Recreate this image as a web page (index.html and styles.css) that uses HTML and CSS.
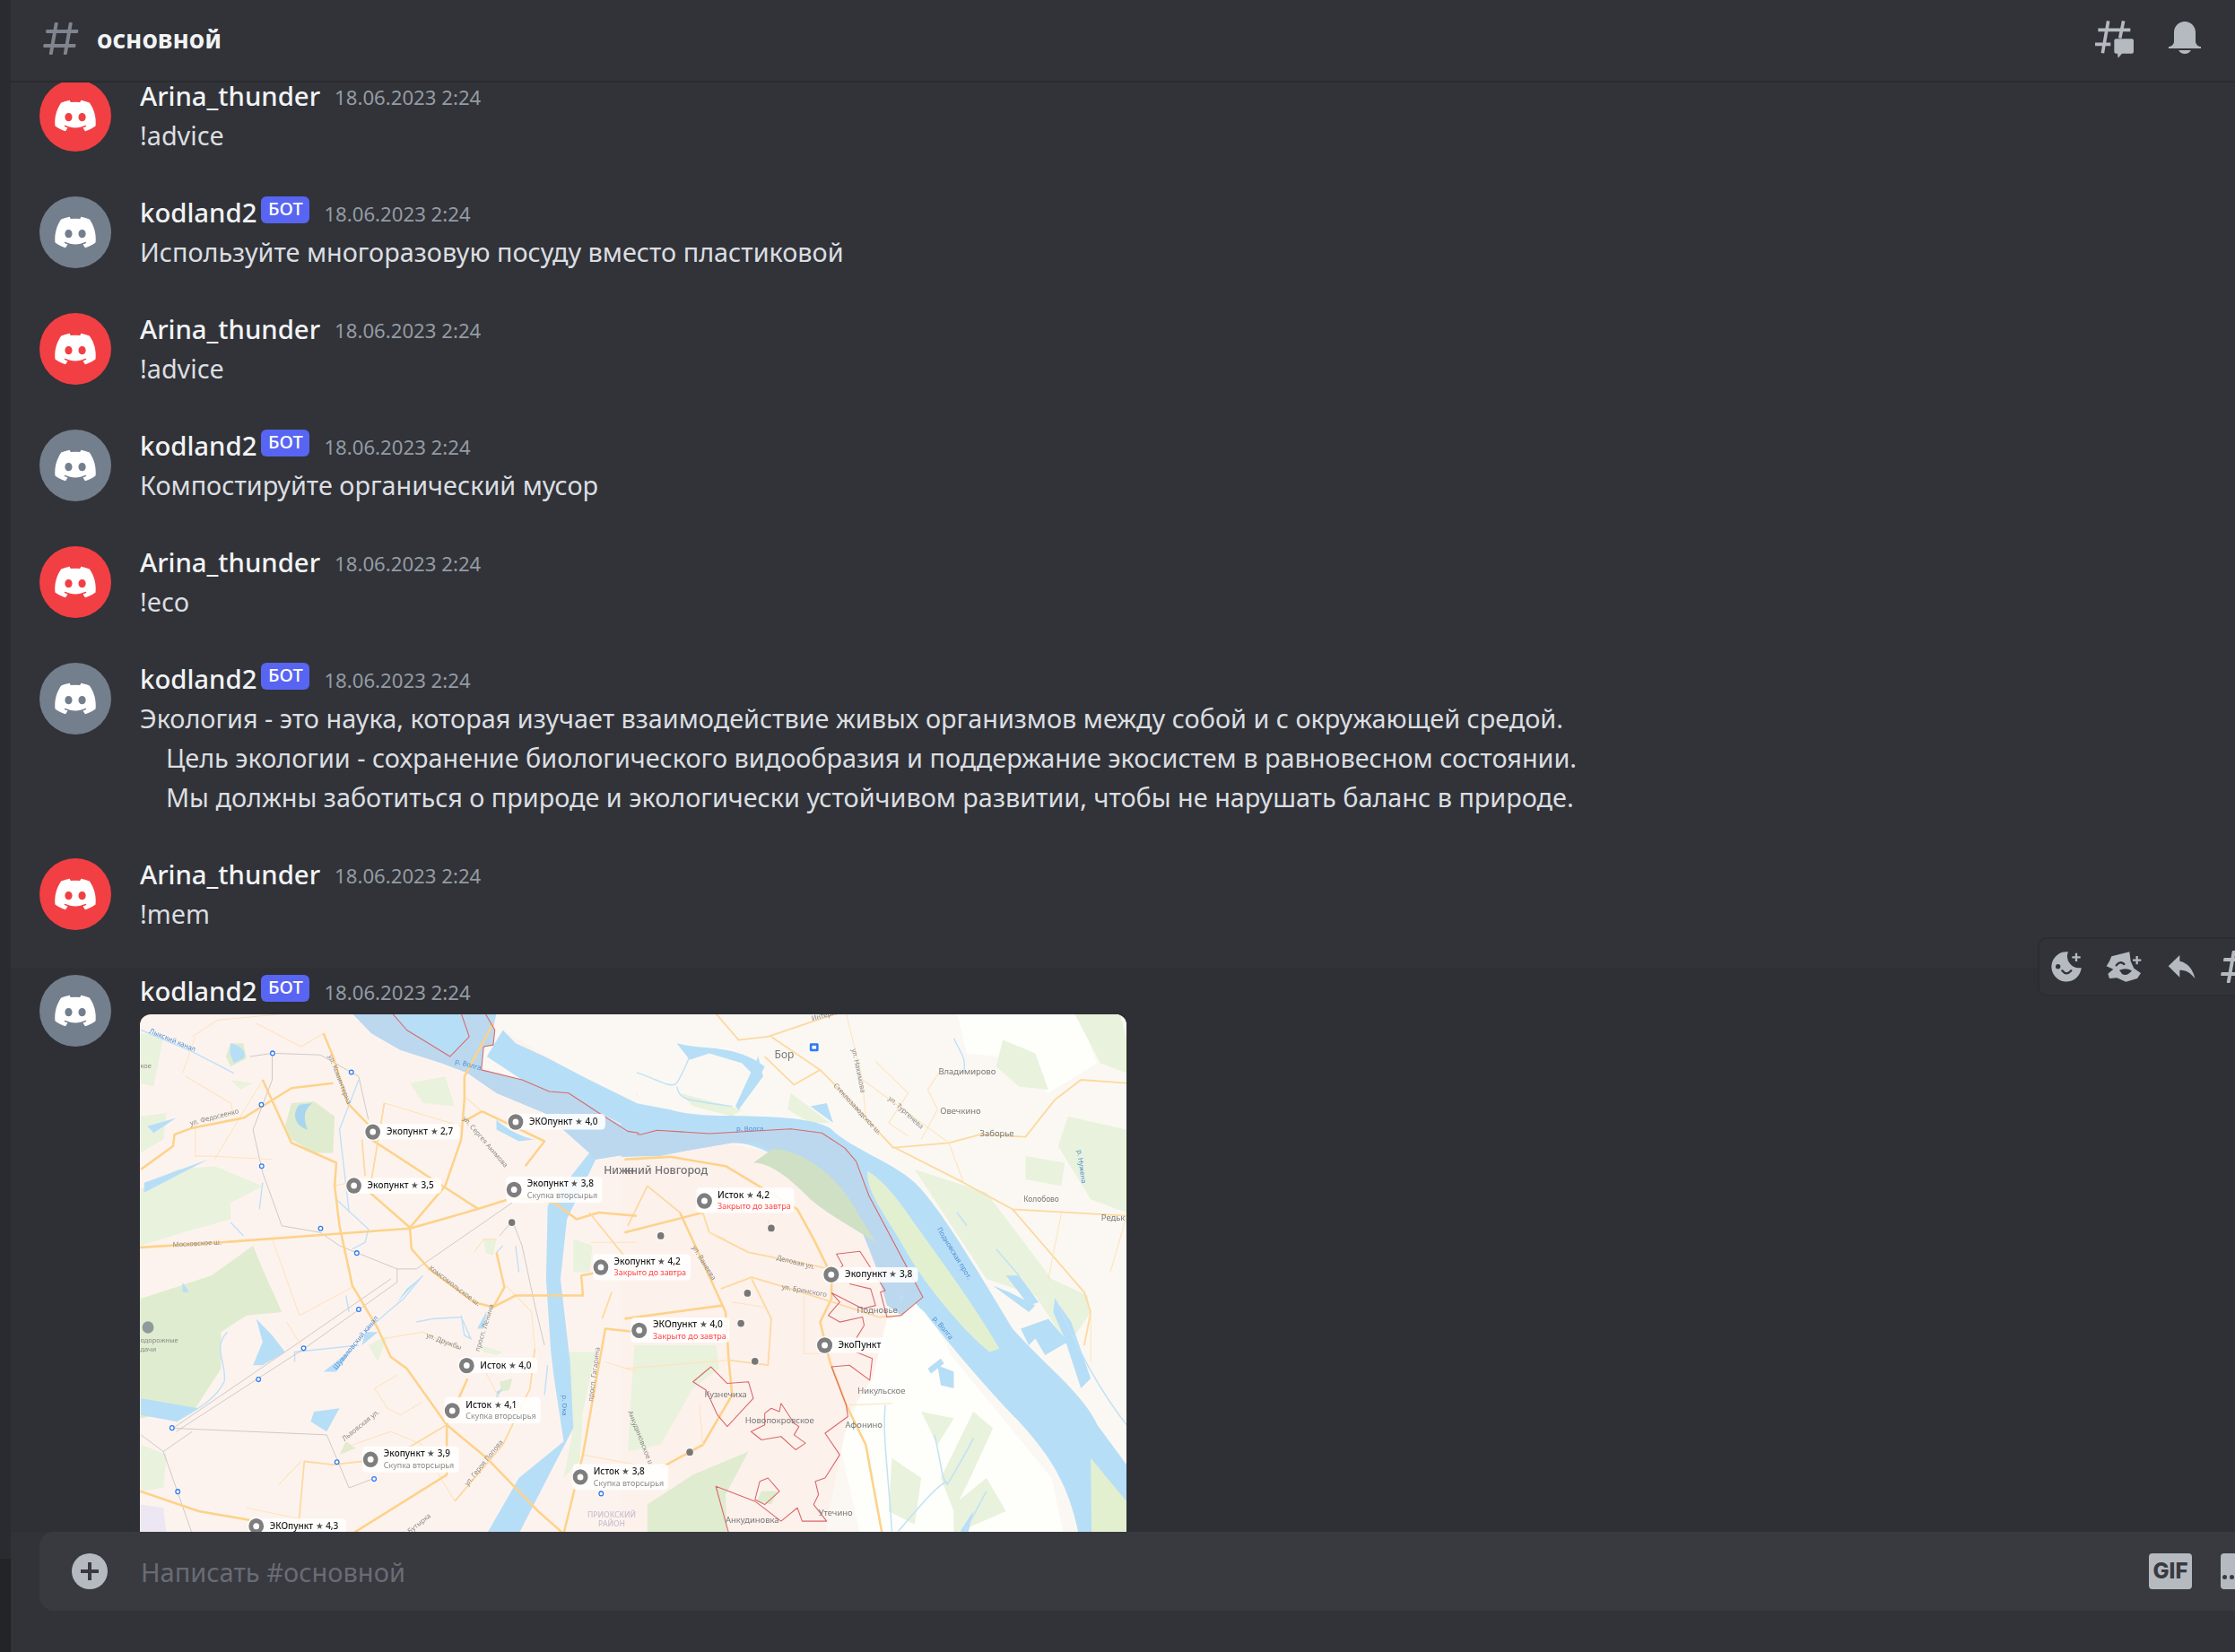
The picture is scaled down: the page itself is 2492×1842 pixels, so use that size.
FILE: index.html
```html
<!DOCTYPE html>
<html lang="ru">
<head>
<meta charset="utf-8">
<title>основной</title>
<link rel="stylesheet" href="styles.css">
</head>
<body>
<svg class="defs" width="0" height="0" aria-hidden="true">
  <defs>
    <symbol id="clyde" viewBox="0 0 24 24"><path fill="#fff" d="M19.27 5.33C17.94 4.71 16.5 4.26 15 4a.09.09 0 0 0-.07.03c-.18.33-.39.76-.53 1.09a16.09 16.09 0 0 0-4.8 0c-.14-.34-.35-.76-.54-1.09-.01-.02-.04-.03-.07-.03-1.5.26-2.93.71-4.27 1.33-.01 0-.02.01-.03.02-2.72 4.07-3.47 8.03-3.1 11.95 0 .02.01.04.03.05 1.8 1.32 3.53 2.12 5.24 2.65.03.01.06 0 .07-.02.4-.55.76-1.13 1.07-1.74.02-.04 0-.08-.04-.09-.57-.22-1.11-.48-1.64-.78-.04-.02-.04-.08-.01-.11.11-.08.22-.17.33-.25.02-.02.05-.02.07-.01 3.44 1.57 7.15 1.57 10.55 0 .02-.01.05-.01.07.01.11.09.22.17.33.26.04.03.04.09-.01.11-.52.31-1.07.56-1.64.78-.04.01-.05.06-.04.09.32.61.68 1.19 1.07 1.74.03.01.06.02.09.01 1.72-.53 3.45-1.33 5.25-2.65.02-.01.03-.03.03-.05.44-4.53-.73-8.46-3.1-11.95-.01-.01-.02-.02-.04-.02zM8.52 14.91c-1.03 0-1.89-.95-1.89-2.12s.84-2.12 1.89-2.12c1.06 0 1.9.96 1.89 2.12 0 1.17-.84 2.12-1.89 2.12zm6.97 0c-1.03 0-1.89-.95-1.89-2.12s.84-2.12 1.89-2.12c1.06 0 1.9.96 1.89 2.12 0 1.17-.83 2.12-1.89 2.12z"/></symbol>
    <symbol id="hash" viewBox="0 0 24 24"><path fill-rule="evenodd" d="M5.88657 21C5.57547 21 5.3399 20.7189 5.39427 20.4126L6.00001 17H2.59511C2.28449 17 2.04905 16.7198 2.10259 16.4138L2.27759 15.4138C2.31946 15.1746 2.52722 15 2.77011 15H6.35001L7.41001 9H4.00511C3.69449 9 3.45905 8.71977 3.51259 8.41381L3.68759 7.41381C3.72946 7.17456 3.93722 7 4.18011 7H7.76001L8.39677 3.41262C8.43914 3.17391 8.64664 3 8.88907 3H9.87344C10.1845 3 10.4201 3.28107 10.3657 3.58738L9.76001 7H15.76L16.3968 3.41262C16.4391 3.17391 16.6466 3 16.8891 3H17.8734C18.1845 3 18.4201 3.28107 18.3657 3.58738L17.76 7H21.1649C21.4755 7 21.711 7.28023 21.6574 7.58619L21.4824 8.58619C21.4406 8.82544 21.2328 9 20.9899 9H17.41L16.35 15H19.7549C20.0655 15 20.301 15.2802 20.2474 15.5862L20.0724 16.5862C20.0306 16.8254 19.8228 17 19.5799 17H16L15.3632 20.5874C15.3209 20.8261 15.1134 21 14.8709 21H13.8866C13.5755 21 13.3399 20.7189 13.3943 20.4126L14 17H8.00001L7.36325 20.5874C7.32088 20.8261 7.11337 21 6.87094 21H5.88657ZM9.41045 9L8.35045 15H14.3504L15.4104 9H9.41045Z"/></symbol>
    <g id="pin"><circle r="27" fill="#fff"/><circle r="23.5" fill="#7e7e7e"/><circle r="9.5" fill="#fff"/></g>
    <g id="metro"><circle r="6.5" fill="#fff" stroke="#2e7bf0" stroke-width="3.5"/></g>
    <g id="dot"><circle r="13" fill="#fff" opacity=".7"/><circle r="10.5" fill="#777"/></g>
  </defs>
</svg>

<div class="app">
  <div class="rail"><div class="rail-top"></div><div class="rail-bottom"></div></div>
  <main class="chat">
    <header class="topbar">
      <svg class="hash-icon"><use href="#hash"/></svg>
      <h1 class="channel">основной</h1>
      <div class="top-actions">
        <svg class="threads-icon" viewBox="405 68 135 130"><path class="ic-s" d="M452 72 433 180M503 72 491 130M418 102H526M408 150H460"/><path class="ic-f" d="M478 132H531a6 6 0 0 1 6 6V175a6 6 0 0 1-6 6H498L485 196 483 181H478a6 6 0 0 1-6-6V138a6 6 0 0 1 6-6Z"/></svg>
        <svg class="bell-icon" viewBox="0 0 24 24"><path class="ic-f" d="M18 9V14C18 15.657 19.344 17 21 17V18H3V17C4.656 17 6 15.657 6 14V9C6 5.686 8.686 3 12 3C15.314 3 18 5.686 18 9ZM11.9999 21C10.5239 21 9.24993 20.19 8.55493 19H15.4449C14.7499 20.19 13.4759 21 11.9999 21Z"/></svg>
      </div>
    </header>

    <section class="messages">
      <div class="list">
        <article class="msg">
          <div class="avatar red"><svg><use href="#clyde"/></svg></div>
          <div class="body"><div class="meta"><span class="name">Arina_thunder</span><time class="time">18.06.2023 2:24</time></div><p class="text">!advice</p></div>
        </article>
        <article class="msg">
          <div class="avatar grey"><svg><use href="#clyde"/></svg></div>
          <div class="body"><div class="meta"><span class="name">kodland2</span><span class="bot">БОТ</span><time class="time">18.06.2023 2:24</time></div><p class="text">Используйте многоразовую посуду вместо пластиковой</p></div>
        </article>
        <article class="msg">
          <div class="avatar red"><svg><use href="#clyde"/></svg></div>
          <div class="body"><div class="meta"><span class="name">Arina_thunder</span><time class="time">18.06.2023 2:24</time></div><p class="text">!advice</p></div>
        </article>
        <article class="msg">
          <div class="avatar grey"><svg><use href="#clyde"/></svg></div>
          <div class="body"><div class="meta"><span class="name">kodland2</span><span class="bot">БОТ</span><time class="time">18.06.2023 2:24</time></div><p class="text">Компостируйте органический мусор</p></div>
        </article>
        <article class="msg">
          <div class="avatar red"><svg><use href="#clyde"/></svg></div>
          <div class="body"><div class="meta"><span class="name">Arina_thunder</span><time class="time">18.06.2023 2:24</time></div><p class="text">!eco</p></div>
        </article>
        <article class="msg">
          <div class="avatar grey"><svg><use href="#clyde"/></svg></div>
          <div class="body"><div class="meta"><span class="name">kodland2</span><span class="bot">БОТ</span><time class="time">18.06.2023 2:24</time></div>
            <p class="text">Экология - это наука, которая изучает взаимодействие живых организмов между собой и с окружающей средой.</p>
            <p class="text indent">Цель экологии - сохранение биологического видообразия и поддержание экосистем в равновесном состоянии.</p>
            <p class="text indent">Мы должны заботиться о природе и экологически устойчивом развитии, чтобы не нарушать баланс в природе.</p>
          </div>
        </article>
        <article class="msg">
          <div class="avatar red"><svg><use href="#clyde"/></svg></div>
          <div class="body"><div class="meta"><span class="name">Arina_thunder</span><time class="time">18.06.2023 2:24</time></div><p class="text">!mem</p></div>
        </article>
        <article class="msg hovered">
          <div class="avatar grey"><svg><use href="#clyde"/></svg></div>
          <div class="body"><div class="meta"><span class="name">kodland2</span><span class="bot">БОТ</span><time class="time">18.06.2023 2:24</time></div>
            <svg class="map" viewBox="0 0 1100 640">
              <rect class="m-base" width="1100" height="640"/>
              <g transform="translate(544,-1) scale(.3635,.37)">
                <rect class="m-east" x="0" y="-10" width="1540" height="1780"/>
                <path class="m-white" d="M1010 0H1380L1440 150 1290 240 1130 130 1040 120ZM780 640 1000 1040 1300 1400 1380 1768H760L650 1300 780 1000Z"/>
                <path class="m-city" d="M-20 420 300 390 500 430 620 600 760 690 800 900 750 1100 680 1200 650 1340 610 1540 600 1768H-20Z"/>
                <path class="m-g1" d="M1150 80 1250 120 1290 230 1200 220 1130 160ZM1350 310 1530 350V600L1420 560 1320 400ZM1370 0H1510L1530 80V180L1450 150ZM1220 430 1340 450 1330 520 1220 500ZM900 1200 1000 1220 950 1300ZM1060 1200 1120 1250 1050 1400 1000 1500 960 1400ZM810 1340 900 1400 880 1540 800 1500ZM1000 1480 1100 1400 1160 1500 1000 1568ZM880 470 1100 540 1300 800 1410 850 1420 900 1350 1000 1250 850 1100 800 1000 650Z"/>
                <path class="m-g1" d="M160 240 350 290 320 310 200 280ZM500 240 620 330 560 330 490 290ZM20 1000 270 1000 280 1070 200 1130 100 1300 0 1320Z"/>
                <path class="m-g2" d="M60 1480 200 1390 370 1320 300 1450 310 1768H60ZM410 1440 460 1440 440 1480 395 1470Z"/>
                <path class="m-w" d="M-20 262 130 290C180 305 260 310 320 308 400 310 560 310 620 345 700 420 830 450 900 530 980 620 1100 820 1180 950 1280 1060 1400 1150 1440 1240L1530 1360V1768H1400C1400 1460 1300 1340 1200 1230 1100 1130 980 990 910 900 860 860 810 780 760 700 700 600 640 560 560 500 480 440 400 390 320 390 200 410 100 430-20 432Z"/>
                <path class="m-w" d="M150 90C220 110 330 90 420 160L400 200 350 150 250 120 190 140ZM1160 790H1200L1260 870 1230 880ZM1205 950 1290 920 1350 990 1280 1030 1250 980 1230 1000ZM1310 860 1360 930 1420 1100 1390 1130 1340 980 1305 900ZM400 130 415 190 340 290 330 280ZM0 260 30 240 0 320ZM560 280 610 270 630 330ZM950 1060 1000 1080 1000 1130 960 1120ZM920 1070 960 1040 970 1055 930 1085ZM1020 1560 1060 1500 1040 1580ZM1120 820 1170 840 1250 880 1230 900Z"/>
                <path class="m-island2" d="M1420 1340 1470 1400 1530 1470V1768H1425Z"/>
                <path class="m-ws" d="M0 170C80 190 130 230 150 210 170 180 180 150 190 130M150 220C160 260 170 260 320 280M790 1180C780 1260 800 1400 810 1560M940 1270C960 1340 960 1400 980 1420 1040 1320 1050 1300 1060 1280M1310 860C1370 980 1420 1100 1530 1240M830 1560C900 1480 950 1420 980 1410M1030 1568 1100 1440M1000 75C1020 120 1040 130 1030 180M1010 600 1040 640M1130 710 1200 790"/>
                <path class="m-tint" d="M-20 362 40 365 90 352 250 362 500 348 595 360 665 405 700 445 740 550 905 855 838 910 795 880 760 760 700 610 640 560 560 500 480 440 400 390 320 390 200 410 100 430-20 432Z"/>
                <path class="m-w" d="M835 845 850 860 835 870Z"/>
                <path class="m-island" d="M445 408C520 410 620 470 680 560L760 690C700 650 620 610 560 560 500 500 440 450 385 450Z"/>
                <path class="m-island2" d="M735 475C780 500 830 560 870 620 950 730 1050 860 1140 1010L1110 1020C1020 950 900 800 850 710 800 620 730 540 735 475Z"/>
                <path class="m-rd" d="M440 70 590 170 510 215 420 130M270 0 340 80 430 70 640 0M590 170 640 220 810 400 1030 510 1180 590 1530 610M810 405 985 390 1080 365 1220 372 1310 260 1390 200 1530 210M1180 590 1400 840 1420 900 1400 1000"/>
                <path class="m-rt" d="M670 0 720 200 730 320M720 200 985 390 1030 510M760 145 860 240 800 330 860 370M920 230 960 170M920 230 950 290 900 380M1420 900 1420 1050M1330 600 1290 800M1530 610 1480 780"/>
                <path class="m-rm" d="M-10 440 130 432 300 460 520 590 570 680 625 790V860L590 930 620 1050 670 1180 730 1300 780 1568M-10 660 230 600M160 600 300 900 310 1050 320 1150 230 1300 100 1370M-10 920 290 880"/>
                <path class="m-rd" d="M230 600 250 660 370 720 620 770M285 830 380 795 500 830 660 880 770 915 840 910M380 800 440 920 430 1060 310 1045M0 640 60 520 160 600"/>
                <path class="m-rt" d="M320 870 420 885M540 850V1025H590M250 660 300 680M220 1180 230 1300M680 1180 810 1175M440 660 430 620M-10 1070 310 1045"/>
                <path class="m-red" d="M-20 362 40 365 90 352 250 362 500 348 595 360 665 405 700 445 740 550 905 855 838 910 795 915 775 840 790 835 712 717 640 725 660 760 625 790M625 842 720 890 760 880 745 830 680 815M625 842 650 870 615 910 650 930 720 915 725 940 700 980M700 1020 750 1040 742 1105 680 1060 625 1065 670 1180 675 1215 605 1265 650 1330 605 1400 575 1410 585 1450 570 1480 610 1530 535 1530 520 1490 470 1530 390 1470 270 1425 310 1568M200 1110 255 1065 305 1115 370 1110 385 1160 305 1245 275 1210 240 1135ZM420 1205 440 1190 465 1200 470 1175 510 1235 525 1245 510 1270 545 1295 515 1315 470 1275 410 1285 378 1260 420 1240ZM405 1410 430 1400 465 1440 420 1480 390 1465Z"/>
              </g>
              <g transform="translate(-6,-1) scale(.3571,.37)">
                <path class="m-g1" d="M18 530 130 470 250 460 400 520 300 570 300 620 150 660 18 700ZM18 60 90 70 60 220 18 210ZM18 310 100 300 90 380 18 420ZM860 210 970 190 1000 280 900 270ZM300 200 370 210 330 230ZM1340 1020H1440L1400 1200 1390 1350 1340 1400 1370 1250ZM730 1000 790 970 760 1050ZM20 1300 100 1330 90 1430 20 1440ZM1090 680 1130 680 1120 730 1095 720ZM1080 1000 1150 1020 1130 1030 1090 1020ZM1370 680 1430 700 1420 780 1370 780Z"/>
                <path class="m-g2" d="M18 860 240 790 370 700 400 770 460 900 350 910 270 960 270 1070 190 1190 18 1220ZM490 270 560 265 625 310 620 420 560 420 490 380 470 340ZM300 90 340 90 350 135 300 160 285 130ZM660 1290 690 1310 640 1330ZM1140 1110 1180 1100 1170 1135 1145 1140Z"/>
                <path class="m-lav" d="M18 1480 90 1490 100 1568H18Z"/>
                <path class="m-w" d="M680 0H1130L1090 175 1210 200 1450 300 1568 360V420L1440 440 1350 620 1330 800 1360 1050 1370 1250 1300 1380 1200 1568H1100L1200 1400 1340 1290 1310 1100 1300 1020 1285 800 1290 580 1420 420 1280 300 1130 240 1040 180 960 150 830 110 740 60Z"/>
                <path class="m-white-land" d="M1130 0 1125 50 1090 100 1083 170 1210 200 1120 130 1150 50 1290 130 1530 270 1568 280V0Z"/>
                <path class="m-w" d="M1150 50 1190 90 1280 130 1420 200 1568 270V355L1450 300 1295 235 1210 200 1100 130ZM1030 100 1050 70 1060 40 1080 30 1100 100 1020 120ZM1130 320C1150 340 1200 370 1250 380L1200 385 1130 350Z"/>
                <path class="m-tint" d="M805 0 850 50 985 130 1045 70 1020 0H1095L1125 50 1120 95 1090 100 1083 170 1210 200 1295 235 1355 240 1450 300 1540 355 1568 360V420L1440 440 1420 420 1280 300 1130 240 1040 180 960 150 830 110 740 60 680 0Z"/>
                <path class="m-w" d="M380 920 430 970 470 1020 400 1060 370 1060 400 990ZM720 960 760 960 710 1000ZM590 1080 680 1010 630 1080ZM560 1200 640 1190 600 1260 550 1230ZM20 1160 200 1190 130 1230 20 1210ZM300 90C340 100 350 120 340 135L310 150 298 120ZM30 510 230 440 150 480 30 540ZM1070 950 1100 895 1090 950ZM820 870 900 790 850 830ZM40 340 130 315 60 360ZM150 810 170 840 150 840ZM1130 1140 1150 1130 1130 1160Z"/>
                <path class="m-ws" d="M290 960C240 1010 290 1050 280 1110 250 1170 180 1200 130 1230M300 630 340 670M400 510 390 590M660 850 670 900M20 50 180 115 310 180M720 960 790 900 840 860 900 790M630 560 730 650 720 690 680 710M700 200 640 350 670 600M1130 720 1150 700M500 1050 500 1020 700 1000M1020 910 1030 970 1050 980 1020 915 930 920 880 930M1190 700 1200 780M1290 1060 1280 1150"/>
                <path class="m-ring" d="M515 275C490 300 500 340 540 350 525 310 530 290 555 270Z"/>
                <path class="m-rl" d="M430 120V200L370 350 400 480 460 640 580 660 640 700 820 770H880L1180 570M120 1250 500 1000 800 800M130 1260 530 1010 820 810V770M120 1250 600 1270 670 1430 750 1400M20 1270 90 1320 180 1568M360 130 430 120 580 125 700 190 730 320M1140 670 1180 625 1210 700 1250 880 1280 1000M90 1320 180 1260"/>
                <path class="m-rt" d="M180 70 260 20 480 0M380 30 520 100 590 60M150 180 190 70M160 190 300 270 310 310M190 330V430H240L430 440M400 200 250 440M780 270 1020 340M780 270 740 500M1030 250 1090 300M620 520 720 500M430 680 515 910M515 910 680 825M475 930 520 1000M780 980 900 960 1010 1010M1095 1080 1140 1160M750 1130 820 1090M750 1130 790 1190 830 1210 900 1170M650 1310 800 1260 900 1300M450 1420 520 1350M900 1310 1000 1470M350 1490 650 1550M1160 820 1240 900 1250 1010M1400 1330 1568 1360M1060 720 1090 680 1130 680M1425 690H1568M1470 1050 1568 1080"/>
                <path class="m-rm" d="M590 60 620 130 665 270 730 335M20 470 120 400 125 365 180 345 340 315 490 225 620 210M400 200 490 390 630 450 625 520 640 640 680 820 760 950 800 1035 850 1070 975 1240 1100 1340 1260 1500 1340 1568M18 705 270 690 620 665 860 648 1070 590 1185 555M740 380 970 525 1075 590M735 540 860 645 970 520 1020 380 1030 260V190L1120 30M860 650 865 710 920 770 1060 870 1120 885 1190 850H1400L1395 790 1450 780M1130 720 1155 825 1120 885M680 1568 975 1390V1240L1040 1100M1340 1568 1400 1330 1470 950 1568 960M1085 295 1030 325M1085 295 1280 385 1220 460M1185 555 1310 570 1380 620 1450 600 1568 610M18 1440 200 1500 380 1530"/>
                <path class="m-rd" d="M975 1240 800 1340 620 1360 530 1350 510 1568M780 270 740 500H710M1250 1010 1235 1130 1150 1300 1000 1470M1490 840 1460 920M710 380 720 490M1420 600 1570 780"/>
                <path class="m-red" d="M805 0 850 50 985 130 1045 70 1020 0M1095 0 1125 50 1120 95 1090 100 1083 170 1210 200 1295 235 1355 240 1450 300 1540 355 1575 360"/>
              </g>

              <g transform="translate(544,-1) scale(.3635,.37)">
                <text class="m-town big" x="450" y="135">Бор</text>
                <rect x="558" y="90" width="27" height="24" rx="4" fill="#2e7bf0"/><rect x="565" y="97" width="13" height="10" fill="#fff"/>
                <text class="m-town" x="953" y="183">Владимирово</text>
                <text class="m-town" x="958" y="304">Овечкино</text>
                <text class="m-town" x="1080" y="370">Заборье</text>
                <text class="m-town s" x="1214" y="567">Колобово</text>
                <text class="m-town" x="1452" y="624">Редьк</text>
                <text class="m-town" x="703" y="902">Подновье</text>
                <text class="m-town" x="705" y="1145">Никульское</text>
                <text class="m-town" x="667" y="1250">Афонино</text>
                <text class="m-town" x="235" y="1157">Кузнечиха</text>
                <text class="m-town" x="360" y="1234">Новопокровское</text>
                <text class="m-town" x="300" y="1536">Анкудиновка</text>
                <text class="m-town" x="585" y="1514">Утечино</text>
                <text class="m-city-name" x="-10" y="485">кний Новгород</text>
                <text class="m-river" x="333" y="355">р. Волга</text>
                <text class="m-river" transform="translate(935,920) rotate(50)">р. Волга</text>
                <text class="m-river" transform="translate(948,650) rotate(58)">Подновская прот.</text>
                <text class="m-river" transform="translate(1378,412) rotate(82)">р. Нужена</text>
                <text class="m-st" transform="translate(687,108) rotate(78)">ул. Нахимова</text>
                <text class="m-st" transform="translate(798,258) rotate(42)">ул. Тургенева</text>
                <text class="m-st" transform="translate(630,218) rotate(47)">Стеклозаводское ш.</text>
                <text class="m-st" transform="translate(197,705) rotate(58)">ул. Ванеева</text>
                <text class="m-st" transform="translate(455,742) rotate(14)">Деловая ул.</text>
                <text class="m-st" transform="translate(472,830) rotate(10)">ул. Бринского</text>
                <text class="m-st" transform="translate(565,22) rotate(-14)">Интернац</text>
                <text class="m-st" transform="translate(0,1200) rotate(68)">Анкудиновское ш.</text>

                <rect class="m-box" x="210" y="525" width="300" height="76" rx="12"/>
                <use href="#pin" x="235" y="565"/>
                <text class="m-l" x="275" y="556">Исток <tspan class="m-star">★</tspan> 4,2</text>
                <text class="m-sub warn" x="275" y="590">Закрыто до завтра</text>

                <rect class="m-box" x="600" y="765" width="290" height="46" rx="12"/>
                <use href="#pin" x="624" y="787"/>
                <text class="m-l" x="666" y="795">Экопункт <tspan class="m-star">★</tspan> 3,8</text>

                <rect class="m-box" x="580" y="977" width="213" height="46" rx="12"/>
                <use href="#pin" x="604" y="1000"/>
                <text class="m-l" x="645" y="1008">ЭкоПункт</text>

                <rect class="m-box" x="10" y="916" width="302" height="76" rx="12"/>
                <use href="#pin" x="35" y="955"/>
                <text class="m-l" x="77" y="947">ЭКОпункт <tspan class="m-star">★</tspan> 4,0</text>
                <text class="m-sub warn" x="77" y="981">Закрыто до завтра</text>

                <use href="#dot" x="101" y="670"/><use href="#dot" x="440" y="647"/><use href="#dot" x="367" y="843"/><use href="#dot" x="347" y="934"/><use href="#dot" x="390" y="1048"/><use href="#dot" x="190" y="1322"/>
              </g>

              <g transform="translate(-6,-1) scale(.3571,.37)">
                <text class="m-city-name" x="1465" y="485">Нижн</text>
                <text class="m-st" x="18" y="165">кое</text>
                <text class="m-st" x="18" y="992">одорожные</text>
                <text class="m-st" x="18" y="1019">дачи</text>
                <circle cx="42" cy="946" r="18" fill="#8e9a9c"/>
                <text class="m-st" transform="translate(175,338) rotate(-14)">ул. Федосеенко</text>
                <text class="m-st" transform="translate(120,704) rotate(-3)">Московское ш.</text>
                <text class="m-st" transform="translate(605,128) rotate(68)">ул. Коминтерна</text>
                <text class="m-st" transform="translate(1024,318) rotate(48)">ул. Сергея Акимова</text>
                <text class="m-st" transform="translate(918,770) rotate(36)">Комсомольское ш.</text>
                <text class="m-st" transform="translate(910,975) rotate(20)">ул. Дружбы</text>
                <text class="m-st" transform="translate(1076,1020) rotate(-72)">просп. Ленина</text>
                <text class="m-st" transform="translate(655,1290) rotate(-38)">Львовская ул.</text>
                <text class="m-st" transform="translate(1040,1425) rotate(-50)">ул. Героя Попова</text>
                <text class="m-st" transform="translate(1430,1170) rotate(-82)">просп. Гагарина</text>
                <text class="m-st" transform="translate(860,1568) rotate(-38)">Бутырка</text>
                <text class="m-river" transform="translate(45,58) rotate(22)">Лыкский канал</text>
                <text class="m-river" x="1000" y="150" transform="rotate(15 1000 150)">р. Волга</text>
                <text class="m-river" transform="translate(630,1075) rotate(-50)">Шуваловский канал</text>
                <text class="m-river" transform="translate(1335,1150) rotate(90)">р. Ока</text>
                <text class="m-dist" x="1490" y="1518">ПРИОКСКИЙ</text>
                <text class="m-dist" x="1490" y="1546">РАЙОН</text>

                <rect class="m-box" x="720" y="333" width="295" height="47" rx="12"/>
                <use href="#pin" x="744" y="357"/>
                <text class="m-l" x="787" y="365">Экопункт <tspan class="m-star">★</tspan> 2,7</text>

                <rect class="m-box" x="1166" y="303" width="304" height="47" rx="12"/>
                <use href="#pin" x="1190" y="327"/>
                <text class="m-l" x="1232" y="335">ЭКОпункт <tspan class="m-star">★</tspan> 4,0</text>

                <rect class="m-box" x="662" y="496" width="296" height="47" rx="12"/>
                <use href="#pin" x="685" y="519"/>
                <text class="m-l" x="727" y="527">Экопункт <tspan class="m-star">★</tspan> 3,5</text>

                <rect class="m-box" x="1160" y="492" width="300" height="78" rx="12"/>
                <use href="#pin" x="1185" y="531"/>
                <text class="m-l" x="1226" y="523">Экопункт <tspan class="m-star">★</tspan> 3,8</text>
                <text class="m-sub" x="1226" y="557">Скупка вторсырья</text>

                <rect class="m-box" x="1013" y="1037" width="245" height="47" rx="12"/>
                <use href="#pin" x="1037" y="1061"/>
                <text class="m-l" x="1079" y="1069">Исток <tspan class="m-star">★</tspan> 4,0</text>

                <rect class="m-box" x="968" y="1157" width="300" height="78" rx="12"/>
                <use href="#pin" x="992" y="1197"/>
                <text class="m-l" x="1034" y="1189">Исток <tspan class="m-star">★</tspan> 4,1</text>
                <text class="m-sub" x="1034" y="1222">Скупка вторсырья</text>

                <rect class="m-box" x="712" y="1305" width="301" height="78" rx="12"/>
                <use href="#pin" x="737" y="1344"/>
                <text class="m-l" x="778" y="1336">Экопункт <tspan class="m-star">★</tspan> 3,9</text>
                <text class="m-sub" x="778" y="1370">Скупка вторсырья</text>

                <rect class="m-box" x="1368" y="1358" width="298" height="78" rx="12"/>
                <use href="#pin" x="1392" y="1397"/>
                <text class="m-l" x="1433" y="1389">Исток <tspan class="m-star">★</tspan> 3,8</text>
                <text class="m-sub" x="1433" y="1423">Скупка вторсырья</text>

                <rect class="m-box" x="1432" y="726" width="304" height="78" rx="12"/>
                <use href="#pin" x="1456" y="765"/>
                <text class="m-l" x="1497" y="757">Экопункт <tspan class="m-star">★</tspan> 4,2</text>
                <text class="m-sub warn" x="1497" y="790">Закрыто до завтра</text>

                <rect class="m-box" x="356" y="1522" width="304" height="47" rx="12"/>
                <use href="#pin" x="380" y="1545"/>
                <text class="m-l" x="422" y="1553">ЭКОпункт <tspan class="m-star">★</tspan> 4,3</text>

                <use href="#dot" x="1178" y="630"/>
                <use href="#metro" x="431" y="120"/><use href="#metro" x="677" y="177"/><use href="#metro" x="396" y="275"/><use href="#metro" x="397" y="460"/><use href="#metro" x="581" y="648"/><use href="#metro" x="694" y="722"/><use href="#metro" x="700" y="892"/><use href="#metro" x="528" y="1009"/><use href="#metro" x="387" y="1103"/><use href="#metro" x="117" y="1249"/><use href="#metro" x="632" y="1352"/><use href="#metro" x="748" y="1403"/><use href="#metro" x="135" y="1441"/><use href="#metro" x="1457" y="1447"/>
              </g>
            </svg>
          </div>
          <div class="toolbar">
            <button class="tool"><svg viewBox="252 87 120 120"><path class="ic-f" d="M318 97A50 50 0 1 0 362 150 39 39 0 0 1 318 97Z"/><circle class="ic-cut" cx="284" cy="146" r="8"/><path class="ic-cs" d="M298 160Q312 178 328 160"/><path class="ic-p" d="M345 101V129M331 115H359"/></svg></button>
            <button class="tool"><svg viewBox="443 87 120 120"><path class="ic-f" d="M462 112 522 97 526 128 537 152 560 168 548 186 510 197 480 184 455 186 450 170 468 155 445 145 455 128Z"/><path class="ic-cs" d="M478 142Q490 126 504 138"/><path class="ic-cut" d="M488 158Q510 148 530 160 515 180 498 172Z"/><path class="ic-p" d="M547 111V139M533 125H561"/></svg></button>
            <button class="tool"><svg viewBox="635 87 120 120"><path class="ic-f" d="M652 145 690 108V128C715 132 735 155 741 186 725 165 710 158 690 158V182Z"/></svg></button>
            <button class="tool tool-hash"><svg><use href="#hash"/></svg></button>
          </div>
        </article>
      </div>
    </section>

    <footer class="composer">
      <div class="input">
        <button class="plus"><svg viewBox="0 0 40 40"><circle class="ic-f" cx="20" cy="20" r="20"/><path class="ic-plus" d="M20 10V30M10 20H30"/></svg></button>
        <span class="placeholder">Написать #основной</span>
        <button class="gif">GIF</button>
        <button class="sticker"><i></i><i></i></button>
      </div>
    </footer>
  </main>
</div>
</body>
</html>
```
FILE: styles.css
```css
* { box-sizing: border-box; }
html, body { margin: 0; padding: 0; height: 100%; overflow: hidden; background: #313338; }
body { font-family: "Noto Sans", "Liberation Sans", sans-serif; color: #dbdee1; }
button { border: 0; padding: 0; background: none; font: inherit; }
.defs { position: absolute; }

.app { display: flex; height: 1842px; }
.rail { width: 12px; flex: none; display: flex; flex-direction: column; }
.rail-top { height: 1738px; background: #2a2b30; }
.rail-bottom { flex: 1; background: #232428; }

.chat { flex: 1; min-width: 0; display: flex; flex-direction: column; background: #313338; }

.topbar { height: 92px; flex: none; display: flex; align-items: center; padding: 0 0 0 32px; border-bottom: 2px solid #2a2b2f; background: #313338; position: relative; z-index: 2; }
.hash-icon { width: 48px; height: 48px; fill: #80848e; flex: none; margin-top: -4px; }
.channel { margin: -4px 0 0 16px; font-size: 28px; line-height: 34px; font-weight: 700; color: #f2f3f5; }
.top-actions { margin-left: auto; display: flex; align-items: center; margin-right: 32px; gap: 32px; }
.threads-icon { width: 45px; height: 43.3px; margin-top: -2px; }
.bell-icon { width: 48px; height: 48px; margin-top: -6px; }
.ic-f { fill: #b5bac1; }
.ic-s { fill: none; stroke: #b5bac1; stroke-width: 11; }
.ic-cut { fill: #313338; }
.ic-cs { fill: none; stroke: #313338; stroke-width: 7; stroke-linecap: round; }
.ic-p { fill: none; stroke: #b5bac1; stroke-width: 7; }
.ic-plus { fill: none; stroke: #383a40; stroke-width: 4; }

.messages { flex: 1; min-height: 0; overflow: hidden; }
.list { margin-top: -11px; }
.msg { display: flex; gap: 32px; padding: 8px 0 38px 32px; position: relative; }
.msg.hovered { background: #2e3035; }
.avatar { width: 80px; height: 80px; flex: none; border-radius: 50%; display: flex; align-items: center; justify-content: center; }
.avatar svg { width: 52px; height: 52px; }
.red { background: #f23f43; }
.grey { background: #747f8d; }
.body { min-width: 0; }
.meta { display: flex; align-items: center; height: 40px; }
.name { font-size: 29.3px; line-height: 44px; font-weight: 500; color: #f2f3f5; margin-top: -5px; }
.time { font-size: 22.2px; line-height: 44px; color: #949ba4; margin-left: 16px; margin-top: -1px; }
.bot { height: 30px; width: 54px; margin-left: 5px; margin-top: -10px; background: #5865f2; border-radius: 6px; color: #fff; font-size: 20px; line-height: 28px; font-weight: 500; text-align: center; }
.bot + .time { margin-left: 16px; }
.text { margin: 0; font-size: 28.8px; line-height: 44px; color: #dbdee1; white-space: nowrap; }
.indent { padding-left: 29px; }

.map { display: block; margin-top: 4px; width: 1100px; height: 640px; border-radius: 12px; filter: blur(.35px); }
.m-base { fill: #fdf3ee; }
.m-east { fill: #fbf8f3; }
.m-white { fill: #fefefa; }
.m-white-land { fill: #fbf8f3; }
.m-city { fill: #fdf1ec; }
.m-g1 { fill: #e9f2dc; }
.m-g2 { fill: #dfeccf; }
.m-lav { fill: #ece7f2; }
.m-w { fill: #b7def7; }
.m-ws { fill: none; stroke: #bfe1f7; stroke-width: 4; }
.m-tint { fill: #bcd8ee; }
.m-island { fill: #cfe0c4; }
.m-island2 { fill: #e3f0d0; }
.m-ring { fill: #a9d6ee; }
.m-rm { fill: none; stroke: #fdd28a; stroke-width: 7; stroke-linejoin: round; }
.m-rd { fill: none; stroke: #fdd9a0; stroke-width: 5; stroke-linejoin: round; }
.m-rt { fill: none; stroke: #fde4bf; stroke-width: 3; }
.m-rl { fill: none; stroke: #c9c5c1; stroke-width: 2.5; }
.m-red { fill: none; stroke: #d9686a; stroke-width: 3; stroke-linejoin: round; }
.m-box { fill: #fff; fill-opacity: .88; }
.m-l { font-family: "Noto Sans", sans-serif; font-size: 28px; font-weight: 500; fill: #1a1a1a; }
.m-star { fill: #555; }
.m-sub { font-family: "Noto Sans", sans-serif; font-size: 25px; fill: #8a8a8a; }
.warn { fill: #f44; }
.m-town { font-family: "Noto Sans", sans-serif; font-size: 26px; fill: #777; }
.m-town.big { font-size: 33px; }
.m-town.s { font-size: 23px; }
.m-city-name { font-family: "Noto Sans", sans-serif; font-size: 34px; font-weight: 500; fill: #6f6f72; }
.m-river { font-family: "Noto Sans", sans-serif; font-size: 21px; fill: #4f8fd6; }
.m-st { font-family: "Noto Sans", sans-serif; font-size: 21px; fill: #8a8a8a; }
.m-dist { font-family: "Noto Sans", sans-serif; font-size: 24px; font-weight: 500; fill: #c9bfd0; text-anchor: middle; }

.toolbar { position: absolute; top: -34px; left: 2260px; height: 66px; width: 300px; display: flex; align-items: center; gap: 4px; background: #313338; border: 2px solid #2b2d31; border-radius: 10px; z-index: 1; }
.tool { width: 60px; height: 62px; flex: none; display: flex; align-items: center; justify-content: center; }
.tool svg { width: 40px; height: 40px; }
.tool-hash svg { width: 48px; height: 48px; fill: #b5bac1; }

.composer { height: 134px; flex: none; padding-left: 32px; margin-right: -60px; background: #313338; position: relative; z-index: 1; }
.input { height: 88px; display: flex; align-items: center; background: #383a40; border-radius: 16px; padding: 0 28px 0 36px; }
.plus { width: 40px; height: 40px; flex: none; }
.plus svg { display: block; width: 40px; height: 40px; }
.placeholder { margin-left: 37px; font-size: 29px; color: #696c75; flex: 1; white-space: nowrap; }
.gif { width: 48px; height: 40px; flex: none; background: #b5bac1; border-radius: 4px; color: #383a40; font-family: Inter, "Liberation Sans", sans-serif; font-size: 24px; line-height: 40px; font-weight: 800; text-align: center; }
.sticker { width: 48px; height: 40px; flex: none; margin-left: 32px; background: #b5bac1; border-radius: 4px; display: flex; align-items: flex-end; gap: 3px; padding: 0 0 11px 2px; }
.sticker i { width: 5px; height: 5px; border-radius: 50%; background: #383a40; }
```
